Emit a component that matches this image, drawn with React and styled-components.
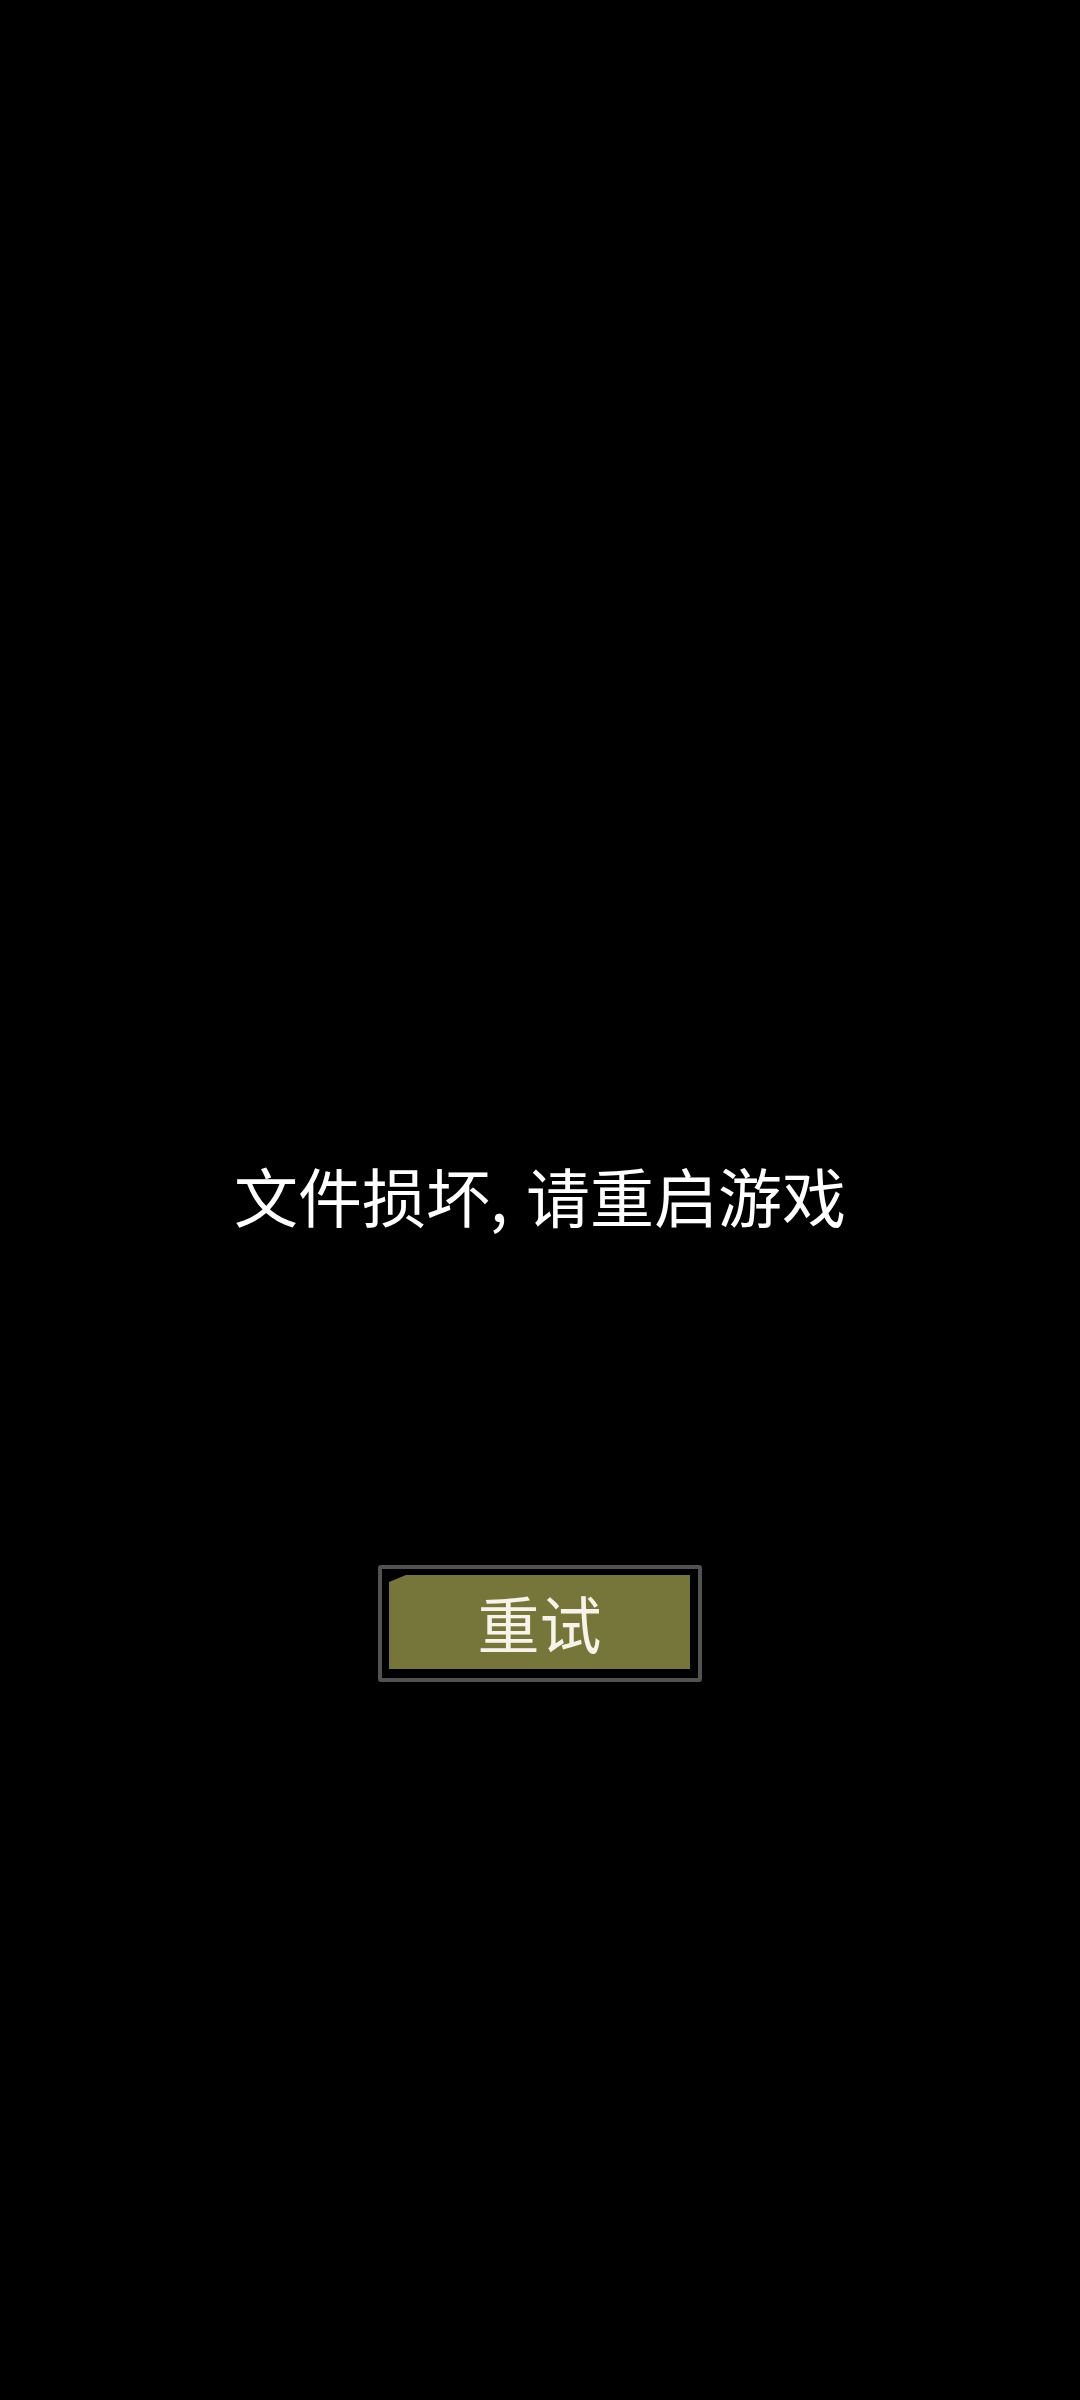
import React from "react";
import styled, { createGlobalStyle } from "styled-components";

const Global = createGlobalStyle`
  html, body { margin: 0; padding: 0; background: #000; }
  body { font-family: "Noto Sans CJK SC", "Noto Sans", sans-serif; }
`;

const Screen = styled.main`
  height: 2400px;
  background: #000;
  display: flex;
  flex-direction: column;
  align-items: center;
  padding-top: 1162px;
  box-sizing: border-box;
`;

const Message = styled.div`
  color: #ffffff;
  font-size: 64px;
  line-height: 64px;
  height: 64px;
  white-space: nowrap;
  font-family: "Noto Sans CJK SC", sans-serif;
`;

const Comma = styled.span`
  margin-right: 4px;
`;

const ButtonFrame = styled.button`
  margin-top: 339px;
  width: 324px;
  height: 117px;
  box-sizing: border-box;
  border: 4px solid #525252;
  border-radius: 3px;
  background: #000;
  padding: 6px 8px 9px 7px;
  display: flex;
  cursor: pointer;
`;

const ButtonFace = styled.span`
  flex: 1;
  background: #77763a;
  clip-path: polygon(17px 0, 100% 0, 100% 100%, 0 100%, 0 7px);
  display: flex;
  align-items: center;
  justify-content: center;
  color: #f6f4e8;
  font-size: 62px;
  line-height: 1;
  font-family: "Noto Sans CJK SC", sans-serif;
`;

export default function App() {
  return (
    <>
      <Global />
      <Screen>
        <Message>
          文件损坏<Comma>,</Comma> 请重启游戏
        </Message>
        <ButtonFrame>
          <ButtonFace>重试</ButtonFace>
        </ButtonFrame>
      </Screen>
    </>
  );
}
